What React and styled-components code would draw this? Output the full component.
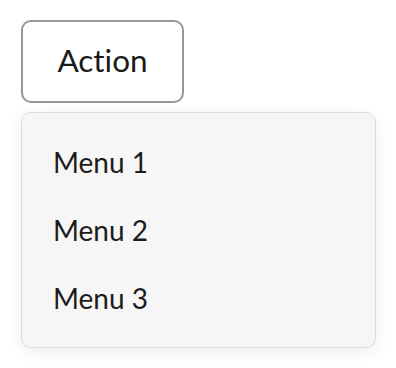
import React from "react";
import styled, { createGlobalStyle } from "styled-components";

const Global = createGlobalStyle`
  html, body { margin: 0; padding: 0; background: #ffffff; }
  body {
    font-family: "Lato", "Noto Sans", sans-serif;
    color: #1c1c1c;
    font-variant-ligatures: none;
  }
`;

const Page = styled.div`
  padding: 20px 21px;
  display: flex;
  flex-direction: column;
  align-items: flex-start;
  gap: 9px;
`;

const ActionButton = styled.button`
  box-sizing: border-box;
  width: 163px;
  height: 83px;
  border: 2px solid #969696;
  border-radius: 10px;
  background: #ffffff;
  font-family: "Lato", "Noto Sans", sans-serif;
  font-variant-ligatures: none;
  font-size: 31.5px;
  color: #1a1a1a;
  padding: 0 0 4px;
  cursor: pointer;
`;

const Menu = styled.ul`
  box-sizing: border-box;
  list-style: none;
  margin: 0;
  width: 355px;
  padding: 15px 0 15px;
  border: 1.5px solid #dcdcdc;
  border-radius: 10px;
  background: #f6f6f6;
  box-shadow: 0 4px 16px rgba(0, 0, 0, 0.07);
  display: flex;
  flex-direction: column;
`;

const MenuItem = styled.li`
  height: 68px;
  display: flex;
  align-items: center;
  padding-left: 31px;
  font-size: 28px;
  color: #1c1c1c;
`;

export default function App() {
  return (
    <>
      <Global />
      <Page>
        <ActionButton>Action</ActionButton>
        <Menu>
          {["Menu 1", "Menu 2", "Menu 3"].map((m) => (
            <MenuItem key={m}>{m}</MenuItem>
          ))}
        </Menu>
      </Page>
    </>
  );
}
